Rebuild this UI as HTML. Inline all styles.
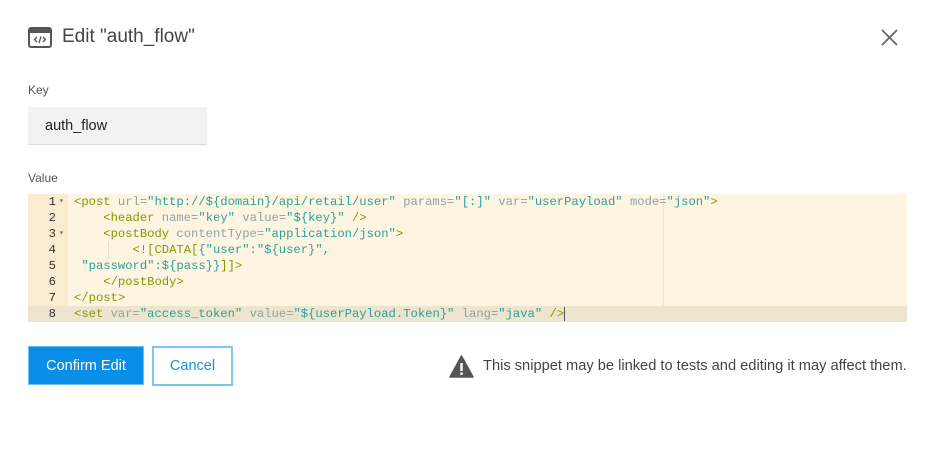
<!DOCTYPE html>
<html><head><style>
body{margin:0;background:#fff;width:927px;height:458px;position:relative;font-family:"Liberation Sans",sans-serif;overflow:hidden}
.abs{position:absolute}
.code{font-family:"Liberation Mono",monospace;font-size:12.2px;line-height:16px;white-space:pre}
.t{color:#859900}.a{color:#93a1a1}.s{color:#2aa198}.p{color:#586e75}
.ln{position:absolute;left:0;width:28px;text-align:right;color:#333}
.fd{position:absolute;left:31px;color:#666;font-size:8px}
</style></head><body>
<svg class="abs" style="left:28px;top:27px" width="24" height="21" viewBox="0 0 24 21">
<rect x="1" y="1" width="22" height="19" rx="2" fill="none" stroke="#555" stroke-width="2"/>
<rect x="1" y="1" width="22" height="5" fill="#555"/>
<path d="M9 10l-2.5 2.5L9 15M15 10l2.5 2.5L15 15M13 9.5l-2 6.5" fill="none" stroke="#555" stroke-width="1.3"/>
</svg>
<div class="abs" style="left:62px;top:26px;font-size:19px;color:#444">Edit "auth_flow"</div>
<svg class="abs" style="left:881px;top:29px" width="17" height="17"><path d="M1 1L16 16M16 1L1 16" stroke="#666" stroke-width="1.8"/></svg>
<div class="abs" style="left:28px;top:83px;font-size:12px;color:#555">Key</div>
<div class="abs" style="left:28px;top:107px;width:179px;height:37px;background:#f2f2f2;border-bottom:1px solid #ddd"></div>
<div class="abs" style="left:45px;top:118px;font-size:14.5px;color:#222">auth_flow</div>
<div class="abs" style="left:28px;top:171px;font-size:12px;color:#555">Value</div>
<div class="abs" style="left:28px;top:194px;width:879px;height:128px;background:#fdf4e1"></div>
<div class="abs" style="left:28px;top:194px;width:40px;height:128px;background:#f9ecd0"></div>
<div class="abs" style="left:28px;top:306px;width:879px;height:16px;background:#ece4cc"></div>
<div class="abs" style="left:663px;top:194px;width:1px;height:112px;background:#ebe3d0"></div>
<div class="abs" style="left:108px;top:242px;width:1px;height:16px;background:#e8dfc8"></div>
<div class="abs code" style="left:28px;top:194px;width:40px;height:128px">
<span class="ln" style="top:0">1</span><span class="fd" style="top:0">▾</span>
<span class="ln" style="top:16px">2</span>
<span class="ln" style="top:32px">3</span><span class="fd" style="top:32px">▾</span>
<span class="ln" style="top:48px">4</span>
<span class="ln" style="top:64px">5</span>
<span class="ln" style="top:80px">6</span>
<span class="ln" style="top:96px">7</span>
<span class="ln" style="top:112px">8</span>
</div>
<div class="abs code" style="left:74px;top:194px"><span class="t">&lt;post</span> <span class="a">url=</span><span class="s">"http://${domain}/api/retail/user"</span> <span class="a">params=</span><span class="s">"[:]"</span> <span class="a">var=</span><span class="s">"userPayload"</span> <span class="a">mode=</span><span class="s">"json"</span><span class="t">&gt;</span>
    <span class="t">&lt;header</span> <span class="a">name=</span><span class="s">"key"</span> <span class="a">value=</span><span class="s">"${key}"</span> <span class="t">/&gt;</span>
    <span class="t">&lt;postBody</span> <span class="a">contentType=</span><span class="s">"application/json"</span><span class="t">&gt;</span>
        <span class="t">&lt;![CDATA[</span><span class="s">{"user":"${user}",</span>
<span class="s"> "password":${pass}}</span><span class="t">]]&gt;</span>
    <span class="t">&lt;/postBody&gt;</span>
<span class="t">&lt;/post&gt;</span>
<span class="t">&lt;set</span> <span class="a">var=</span><span class="s">"access_token"</span> <span class="a">value=</span><span class="s">"${userPayload.Token}"</span> <span class="a">lang=</span><span class="s">"java"</span> <span class="t">/&gt;</span><span style="border-left:1px solid #555"></span></div>
<div class="abs" style="left:28px;top:346px;width:114px;height:37px;background:#0a8fe8;border:1px solid #6ebcf0;color:#fff;font-size:14.5px;text-align:center;line-height:38px">Confirm Edit</div>
<div class="abs" style="left:152px;top:346px;width:77px;height:36px;background:#fff;border:2px solid #80c6f2;color:#1890e0;font-size:14.5px;text-align:center;line-height:37px">Cancel</div>
<svg class="abs" style="left:449px;top:355px" width="25" height="23" viewBox="0 0 25 23"><path d="M12.5 1L24 22H1Z" fill="#555" stroke="#555" stroke-linejoin="round" stroke-width="1.5"/><rect x="11.3" y="8" width="2.4" height="8" fill="#fff"/><rect x="11.3" y="17.5" width="2.4" height="2.4" fill="#fff"/></svg>
<div class="abs" style="left:483px;top:358px;font-size:14.65px;color:#444">This snippet may be linked to tests and editing it may affect them.</div>
</body></html>
